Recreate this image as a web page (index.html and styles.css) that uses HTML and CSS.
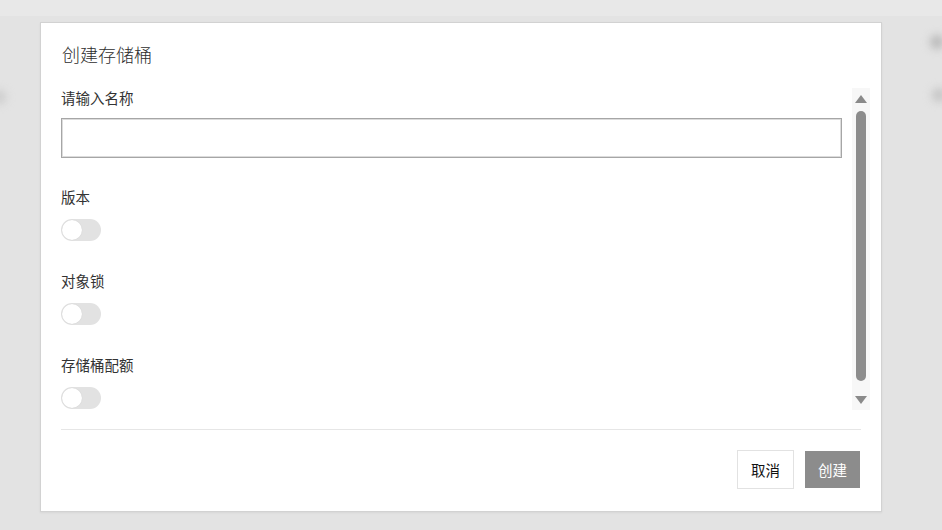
FILE: index.html
```html
<!DOCTYPE html>
<html lang="zh-CN">
<head>
<meta charset="utf-8">
<title>创建存储桶</title>
<link rel="stylesheet" href="styles.css">
</head>
<body>
<div class="backdrop">
  <div class="bg-top"></div>
  <span class="blur-dot dot-r1"></span>
  <span class="blur-dot dot-r2"></span>
  <span class="blur-dot dot-l1"></span>
</div>
<div class="stage">
  <div class="modal">
    <h2 class="modal-title">创建存储桶</h2>
    <div class="modal-body">
      <div class="scroll-content">
        <label class="field-label">请输入名称</label>
        <input class="text-input" type="text">
        <div class="field-label gap first">版本</div>
        <span class="toggle"><span class="knob"></span></span>
        <div class="field-label gap">对象锁</div>
        <span class="toggle"><span class="knob"></span></span>
        <div class="field-label gap">存储桶配额</div>
        <span class="toggle"><span class="knob"></span></span>
      </div>
      <div class="scrollbar">
        <span class="arrow up"></span>
        <div class="track"><span class="thumb"></span></div>
        <span class="arrow down"></span>
      </div>
    </div>
    <div class="modal-footer">
      <button class="btn btn-cancel">取消</button>
      <button class="btn btn-create">创建</button>
    </div>
  </div>
</div>
</body>
</html>
```

FILE: styles.css
```css
* { box-sizing: border-box; }
html, body {
  margin: 0;
  padding: 0;
  width: 942px;
  height: 530px;
  overflow: hidden;
}
body {
  background: #e3e3e3;
  font-family: "Noto Sans CJK SC", "Noto Sans", sans-serif;
  color: #333;
  position: relative;
}
.backdrop {
  position: absolute;
  inset: 0;
  z-index: 0;
}
.bg-top {
  height: 16px;
  background: #e8e8e8;
}
.blur-dot {
  position: absolute;
  width: 14px;
  height: 14px;
  border-radius: 50%;
  background: #b8b8b8;
  filter: blur(4px);
}
.dot-r1 { left: 930px; top: 35px; }
.dot-r2 { left: 932px; top: 88px; background: #c4c4c4; }
.dot-l1 { left: -8px; top: 90px; background: #cccccc; }

.stage {
  position: relative;
  z-index: 1;
  padding: 22px 0 0 40px;
}
.modal {
  width: 842px;
  height: 490px;
  background: #fff;
  border: 1px solid #d2d2d2;
  box-shadow: 0 1px 2px rgba(0,0,0,0.06);
  padding: 19px 20px 21px 20px;
  display: flex;
  flex-direction: column;
}
.modal-title {
  margin: 0 0 0 1px;
  font-size: 18px;
  font-weight: 300;
  line-height: 24px;
  color: #2e2e2e;
  height: 24px;
}
.modal-body {
  margin-top: 22px;
  margin-right: -9px;
  height: 322px;
  display: flex;
  gap: 9px;
}
.scroll-content {
  flex: 1;
  display: flex;
  flex-direction: column;
  align-items: flex-start;
  overflow: hidden;
}
.field-label {
  font-size: 14.5px;
  line-height: 20px;
  height: 20px;
  color: #333;
}
.field-label.gap { margin-top: 30px; }
.field-label.gap.first { margin-top: 29px; }
.text-input {
  margin-top: 10px;
  width: 781px;
  height: 40px;
  border: 1px solid #a6a6a6;
  box-shadow: inset 0 0 0 1px #dcdcdc;
  background: #fff;
  padding: 0 10px;
  font: inherit;
  outline: none;
}
.toggle {
  margin-top: 12px;
  width: 40px;
  height: 22px;
  border-radius: 11px;
  background: #e2e2e2;
  display: flex;
  align-items: center;
  padding: 1px;
}
.knob {
  width: 20px;
  height: 20px;
  border-radius: 50%;
  background: #fff;
  box-shadow: 0 0 1px rgba(0,0,0,0.15);
}
.scrollbar {
  width: 18px;
  background: #f7f7f7;
  display: flex;
  flex-direction: column;
  align-items: center;
  padding: 7px 0 6px;
}
.arrow {
  width: 0;
  height: 0;
  border-left: 6px solid transparent;
  border-right: 6px solid transparent;
}
.arrow.up { border-bottom: 8px solid #8a8a8a; }
.arrow.down { border-top: 8px solid #8a8a8a; }
.track {
  flex: 1;
  width: 10px;
  display: flex;
  flex-direction: column;
  padding: 8px 0 15px;
}
.thumb {
  flex: 1;
  border-radius: 5px;
  background: #8c8c8c;
}
.modal-footer {
  margin-top: 19px;
  border-top: 1px solid #e6e6e6;
  padding: 20px 1px 0 0;
  display: flex;
  justify-content: flex-end;
  align-items: center;
  gap: 11px;
}
.btn {
  font-family: "Noto Sans CJK SC", "Noto Sans", sans-serif;
  font-size: 14.5px;
  line-height: 20px;
  padding: 0;
  cursor: pointer;
}
.btn-cancel {
  width: 57px;
  height: 39px;
  background: #fff;
  color: #111;
  border: 1px solid #e2e2e2;
}
.btn-create {
  width: 55px;
  height: 37px;
  background: #8c8c8c;
  color: #fff;
  border: none;
}
```
